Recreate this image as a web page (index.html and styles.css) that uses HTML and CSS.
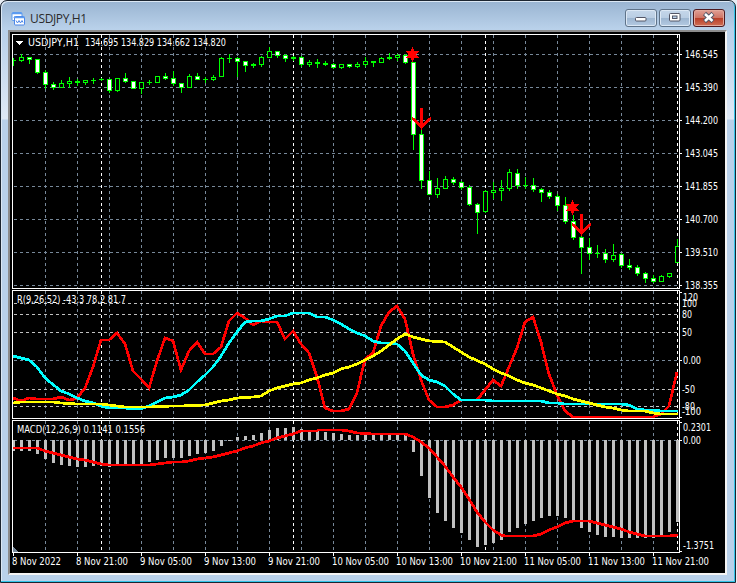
FILE: index.html
```html
<!DOCTYPE html>
<html lang="en">
<head>
    <meta charset="utf-8">
    <title>USDJPY,H1</title>
    <link rel="stylesheet" href="styles.css">
</head>
<body>
    <div class="window">
        <header class="titlebar">
            <svg class="icon" width="16" height="16" viewBox="0 0 16 16">
                <rect x="1" y="1.500" width="10" height="8" rx="1" fill="#fff" stroke="#5b9bf0"/>
                <path d="M1 2.500h10" stroke="#5b9bf0" stroke-width="1.500"/>
                <path d="M2.500 7l1.500-2 1.500 2" fill="none" stroke="#8ab8f5"/>
                <rect x="3.500" y="5.500" width="10" height="8.500" rx="1" fill="#fff" stroke="#4a86e8"/>
                <path d="M3.500 6.500h10" stroke="#5b9bf0" stroke-width="1.500"/>
                <path d="M5 9.500l1.500 2.500 1.500-2.500 1.500 2.500 1.500-2.500 1 2" fill="none" stroke="#4a86e8"/>
            </svg>
            <h1>USDJPY,H1</h1>
            <div class="buttons">
                <button class="btn"><svg width="30" height="16"><rect x="9.500" y="7.500" width="10.500" height="3.500" rx="1" fill="#fff" stroke="#535666"/></svg></button>
                <button class="btn"><svg width="30" height="16"><rect x="9.500" y="3.500" width="10.500" height="7.500" rx="1" fill="#fff" stroke="#535666"/><rect x="12.500" y="6" width="4.500" height="2.500" fill="#b9d1ea" stroke="#535666"/></svg></button>
                <button class="btn close"><svg width="30" height="16"><path d="M10.500 3.500l8.500 8M19 3.500l-8.500 8" stroke="#535666" stroke-width="4.500"/><path d="M11 4l7.500 7M18.500 4l-7.500 7" stroke="#fff" stroke-width="2.600"/></svg></button>
            </div>
        </header>
        <main class="chart">
            <svg id="price" width="715" height="257" viewBox="10 32 715 257"></svg>
            <svg id="osc" width="715" height="130" viewBox="10 289 715 130"></svg>
            <svg id="macd" width="715" height="134" viewBox="10 419 715 134"></svg>
            <svg id="time" width="715" height="20" viewBox="10 553 715 20"></svg>
        </main>
    </div>
    <script src="chart.js"></script>
</body>
</html>
```
FILE: styles.css
```css
body {
    margin: 0;
    background-color: #e8eef5;
}
.window {
    box-sizing: border-box;
    width: 736px;
    height: 583px;
    border: 1px solid #1c2530;
    border-radius: 7px 7px 0 0;
    padding: 0 7px 6px 7px;
    background: linear-gradient(#99b4d1, #b9d1ea 28px, #bcd3eb 40px, #dfe9f5 118px, #b9d1ea 119px);
    box-shadow: inset -1px -1px 0 #32c5e8, inset 1px 1px 0 #dce8f4;
}
.titlebar {
    display: flex;
    align-items: center;
    height: 29px;
    padding: 0 3px;
}
.icon {
    margin-top: 7px;
}
h1 {
    margin: 7px 0 0 3px;
    font: 12px "Open Sans", "Noto Sans", sans-serif;
    line-height: 16px;
    letter-spacing: -0.35px;
    color: #2b2b2b;
}
.buttons {
    display: flex;
    gap: 2px;
    margin: 5px 0 0 auto;
}
.btn {
    width: 32px;
    height: 18px;
    padding: 0;
    border: 1px solid #5f7389;
    border-radius: 3px;
    background: linear-gradient(#c5d7ea, #b9cde3 48%, #9cb5d0 50%, #b4cae2);
    box-shadow: inset 0 0 0 1px #dce8f5;
}
.btn svg {
    display: block;
}
.close {
    border-color: #4e1a20;
    background: linear-gradient(#e0a096, #cf7565 48%, #b83c26 50%, #cf6f55);
    box-shadow: inset 0 0 0 1px #e3a99c;
}
.chart {
    display: flex;
    flex-direction: column;
    width: 715px;
    height: 541px;
    background-color: #000;
    border-style: solid;
    border-width: 2px;
    border-color: #8c8c8c #f4f4f4 #f4f4f4 #8c8c8c;
}
.chart svg {
    display: block;
    flex: none;
    overflow: visible;
    shape-rendering: crispEdges;
}
.chart text {
    font: 10px "DejaVu Sans Condensed", "DejaVu Sans", sans-serif;
    fill: #fff;
}
.border {
    fill: none;
    stroke: #fff;
}
.grid, .level, .day {
    stroke: #778899;
    stroke-dasharray: 3 3;
}
.level {
    stroke: #c0c0c0;
}
.day {
    stroke: #fff;
}
.candle {
    fill: #00ff00;
}
.bull {
    fill: #000;
}
.bear {
    fill: #fff;
}
.bar {
    fill: #c0c0c0;
}
.line {
    fill: none;
    stroke-width: 2.7;
}
.red {
    stroke: #ff0000;
}
.cyan {
    stroke: #00ffff;
}
.yellow {
    stroke: #ffff00;
}
.signal {
    fill: #ff0000;
}
.arrow {
    fill: none;
    stroke: #ff0000;
}
```
FILE: chart.js
```js
var NS = "http://www.w3.org/2000/svg"
var price = document.getElementById("price")
var osc = document.getElementById("osc")
var macd = document.getElementById("macd")
var time = document.getElementById("time")

function add(svg, tag, attrs) {
    var el = document.createElementNS(NS, tag)
    for (var key in attrs) el.setAttribute(key, attrs[key])
    svg.appendChild(el)
    return el
}
function rect(svg, cls, x, y, w, h) {
    add(svg, "rect", {class: cls, x: x, y: y, width: w, height: h})
}
function label(svg, str, x, y, width) {
    add(svg, "text", {x: x, y: y, textLength: width, lengthAdjust: "spacingAndGlyphs"}).textContent = str
}
function vline(svg, cls, x, top, bottom) {
    add(svg, "path", {class: cls, d: "M" + (x + .5) + " " + top + "V" + bottom})
}
function hline(svg, cls, y) {
    add(svg, "path", {class: cls, d: "M14 " + (y + .5) + "H679"})
}
// whole pixels keep the flat parts exactly 2px thick
function line(svg, cls, points) {
    points = points.split(" ").map(function (p) {
        var xy = p.split(",")
        return xy[0] + "," + Math.round(xy[1])
    })
    add(svg, "polyline", {class: "line " + cls, points: points.join(" ")})
}
function pane(svg, top, bottom) {
    for (var x = 45; x < 679; x += 32) vline(svg, "grid", x, top + 1, bottom)
    var days = [101, 293, 485, 677]
    days.forEach(function (x) { vline(svg, "day", x, top + 1, bottom) })
}
function frame(svg, top, bottom) {
    add(svg, "path", {class: "border", d: "M12.5 " + (top + .5) + "H679.5V" + (bottom + .5) + "H12.5Z"})
}

// price: high, body top, body bottom, low, kind (1 = down, 0 = up)
var candles = [
    [58,60,60,65,0],[54,57,60,61,0],[57,57,59,63,1],[59,59,72,73,1],[70,72,84,88,1],[82,84,87,89,1],[80,83,87,87,0],[77,81,83,87,0],
    [79,81,82,85,0],[80,80,82,84,0],[78,80,80,83,0],[78,79,79,80,0],[79,79,90,92,1],[78,78,90,91,0],[73,78,81,82,1],[81,81,88,88,1],
    [82,82,88,93,0],[80,82,82,84,0],[76,76,82,82,0],[73,76,78,79,1],[71,78,83,85,1],[83,83,87,92,1],[74,76,87,87,0],[73,76,79,79,1],
    [77,79,79,82,0],[75,77,79,80,0],[57,58,76,76,0],[54,58,58,62,0],[57,58,61,76,1],[61,61,65,71,1],[63,64,65,67,0],[56,57,64,66,0],
    [47,51,57,57,0],[51,51,55,57,1],[54,55,58,61,1],[56,57,58,60,0],[56,57,64,66,1],[60,62,64,66,0],[59,62,63,67,0],[61,63,64,65,0],
    [63,64,67,68,1],[64,64,67,68,0],[64,64,66,67,1],[62,64,66,67,0],[57,61,64,66,0],[61,61,62,66,0],[57,58,62,62,0],[53,57,58,59,0],
    [54,55,57,60,0],[54,55,62,63,1],[62,62,134,149,1],[128,134,180,188,1],[171,180,194,194,1],[178,188,194,197,0],[176,179,188,188,0],
    [177,179,182,184,1],[181,182,187,189,1],[185,187,204,205,1],[203,204,212,233,1],[190,191,211,212,0],[182,190,192,198,0],[180,188,190,200,0],
    [169,172,188,190,0],[169,173,185,188,1],[177,185,185,188,0],[178,185,189,191,1],[188,189,192,201,1],[190,192,196,198,1],[194,196,205,210,1],
    [197,205,221,223,1],[215,221,237,239,1],[236,237,247,273,1],[238,247,253,259,1],[245,253,253,257,0],[249,253,259,262,1],[244,255,259,261,0],
    [253,254,265,267,1],[259,265,267,269,1],[265,267,273,275,1],[272,273,278,282,1],[275,278,281,282,1],[275,276,281,281,0],[273,273,276,277,0],[239,246,262,262,0]
]
pane(price, 34, 288)
for (var y = 54; y < 288; y += 33) hline(price, "grid", y)
candles.forEach(function (c, i) {
    var x = 13 + 8 * i
    rect(price, "candle", x, c[0], 1, c[3] - c[0] + 1)
    rect(price, "candle", x - 2, c[1], 5, c[2] - c[1] + 1)
    if (c[2] - c[1] > 1) rect(price, c[4] ? "bear" : "bull", x - 1, c[1] + 1, 3, c[2] - c[1] - 1)
})
rect(price, "bull", 10, 35, 2, 250)
rect(price, "bull", 680, 35, 3, 253)
frame(price, 34, 288)

// sell signals: star center, then arrow tip
var signals = [[412.5, 54.5, 421.5, 129], [572.5, 207.5, 581.5, 235]]
signals.forEach(function (s) {
    add(price, "path", {class: "signal", transform: "translate(" + s[0] + " " + s[1] + ")", d: "M0-7.500L2-3.500 6.500-3.500 4 0 6.500 3.500 2 3.500 0 7.500-2 3.500-6.500 3.500-4 0-6.500-3.500-2-3.500z"})
    var g = add(price, "g", {class: "arrow", transform: "translate(" + s[2] + " " + s[3] + ")"})
    add(g, "path", {"stroke-width": 3, d: "M0-21.500V-2"})
    add(g, "path", {"stroke-width": 2.5, d: "M-9.500-11Q-4-7 0-1.500Q4-7 9.500-11"})
})

add(price, "path", {fill: "#fff", d: "M16 41h7l-3.500 4z"})
label(price, "USDJPY,H1", 28, 46, 51)
label(price, "134.695 134.829 134.662 134.820", 85, 46, 141)
var prices = ["146.545", "145.390", "144.200", "143.045", "141.855", "140.700", "139.510", "138.355"]
prices.forEach(function (p, i) {
    label(price, p, 685, 58 + 33 * i, 33)
    rect(price, "bear", 680, 54 + 33 * i, 2, 1)
})

// R oscillator
pane(osc, 290, 418)
hline(osc, "grid", 360)
var levels = [303, 314, 332, 389, 406]
levels.forEach(function (y) { hline(osc, "level", y) })
line(osc, "red", "13,398 21,401 29,398 37,398.5 45,399 53,399 61,397 69,400 75,399 77,397.5 85,387.5 93,367 101,340 109,340 117,333 125,344 133,370.5 141,379 149,388 157,361 165,338 173,341 181,369.5 189,351 197,342 205,353.5 213,353.5 221,347 229,321 237,312.5 245,317.5 253,325 261,321 269,321.5 277,322 285,339 293,330.5 301,343.5 309,352.5 317,376.5 325,408 333,411 341,411 349,408.5 357,392.5 365,359 373,353 381,326 389,311.5 397,305.5 405,319 413,354 421,379.5 429,399.5 437,407 445,407 453,405 461,399.5 477,399.5 485,390 493,380 501,386 509,367 517,348 525,321.5 533,316.5 541,342 549,374 557,395 565,411 573,417 653,417 661,414 669,406 677,372")
line(osc, "cyan", "13,356 21,357.5 29,360 37,366.5 45,378 61,390.5 69,393.5 77,397.5 85,401 93,403 101,405.5 109,408 125,408 133,409 141,409 149,406 157,402 165,398 173,396.5 181,395 189,390 197,382 205,375 213,367 221,356 229,343 237,331.5 245,322 253,321 261,320.5 269,318.5 277,316 285,315.5 293,313.4 301,313 309,313 317,316.5 325,317.4 333,320 341,324 349,329 357,333 365,335.5 373,340.5 381,342.5 389,343 397,344 405,351 413,363 421,375 429,379.5 437,382 445,386 453,393.5 461,400 485,400 493,401 541,401 549,402.5 557,403 565,404 621,404 629,405 637,409 645,410 653,410 661,411 678,411")
line(osc, "yellow", "13,403 21,402 53,402 61,403 77,404 101,404 117,406 125,407 149,407.4 173,406 181,406 205,404.5 213,403 221,401 229,399.5 237,398 253,397 261,395.5 269,391 277,388 285,386 293,383.5 301,382.5 309,379.5 317,377.5 325,374.5 333,372.5 341,369 349,366.5 357,363.5 365,359.5 373,355.5 381,350.5 389,344.5 397,338.5 405,333.5 413,336.5 421,338.5 429,340.5 445,342 453,346.5 461,351.5 469,356.5 485,364 493,368.5 501,373 509,376 517,379.5 525,382.5 533,384.5 541,387.5 549,390.5 557,393.5 565,395.5 573,399 581,401 589,402.5 597,405 605,406.5 613,407.5 621,409.5 629,410.5 645,411 653,412.5 661,414 678,414")
frame(osc, 290, 418)
label(osc, "R(9,26,52) -43.3 78.2 81.7", 17, 303, 109)
label(osc, "120", 683, 301, 15)
label(osc, "100", 682, 307, 15)
label(osc, "80", 682, 318, 10)
label(osc, "50", 682, 336, 10)
label(osc, "0.00", 683, 364, 18)
label(osc, "-50", 682, 393, 13)
label(osc, "-80", 682, 410, 13)
label(osc, "-100", 682, 415, 19)
rect(osc, "bear", 680, 292, 2, 1)
rect(osc, "bear", 680, 360, 2, 1)
rect(osc, "bear", 680, 417, 2, 1)

// MACD histogram, zero at y = 440
var bars = [
    451,451,451,454,459,463,465,466,467,467,466,466,467,465,465,465,465,462,460,458,458,458,456,454,453,451,446,441,
    437,436,435,433,430,428,428,427,429,431,431,432,433,434,435,435,435,435,435,435,435,435,452,476,498,513,521,528,
    533,540,547,545,543,540,532,528,524,521,518,516,516,518,522,528,532,535,537,537,538,538,538,538,538,535,532,522
]
pane(macd, 420, 552)
hline(macd, "grid", 440)
bars.forEach(function (b, i) {
    rect(macd, "bar", 12 + 8 * i, Math.min(b, 440), 3, Math.abs(b - 440))
})
line(macd, "red", "13,448 37,448 45,450.5 53,452.5 61,454.5 69,456.5 77,458.5 85,459.5 93,461.5 101,463.5 109,465 141,465 149,464.5 157,463.5 165,462.5 173,461.5 181,461.5 189,460.5 197,458.5 205,457.5 213,456.5 221,454.5 229,453 237,450.5 245,447.5 253,445.5 261,443 269,440.5 277,437.5 285,435.5 293,433.5 301,431 317,431 318,430 341,430 349,431 357,432.5 373,433.5 381,434 405,434 413,436.5 421,441.5 429,447.5 437,456.5 445,465.5 453,476.5 461,487 469,499 477,511.5 485,521.5 493,529.5 501,534.5 505,536 533,536 541,533.5 549,529.5 557,526.5 565,523 573,521 589,521 597,522.5 605,524.5 613,526.5 621,528.5 629,531.5 637,534 645,536 669,536 678,534.5")
add(macd, "path", {fill: "#778899", d: "M13 547l5 5h-5z"})
frame(macd, 420, 552)
label(macd, "MACD(12,26,9) 0.1141 0.1556", 17, 433, 128)
label(macd, "0.2301", 683, 431, 28)
label(macd, "0.00", 683, 444, 18)
label(macd, "-1.3751", 683, 549, 31)
rect(macd, "bear", 680, 422, 2, 1)
rect(macd, "bear", 680, 440, 2, 1)
rect(macd, "bear", 680, 551, 2, 1)

// time axis
var times = ["8 Nov 2022", "8 Nov 21:00", "9 Nov 05:00", "9 Nov 13:00", "9 Nov 21:00", "10 Nov 05:00", "10 Nov 13:00", "10 Nov 21:00", "11 Nov 05:00", "11 Nov 13:00", "11 Nov 21:00"]
times.forEach(function (t, i) {
    rect(time, "bear", 13 + 64 * i, 553, 1, 3)
    label(time, t, 12 + 64 * i, 565, i == 0 ? 49 : i < 5 ? 52 : 57)
})
```
